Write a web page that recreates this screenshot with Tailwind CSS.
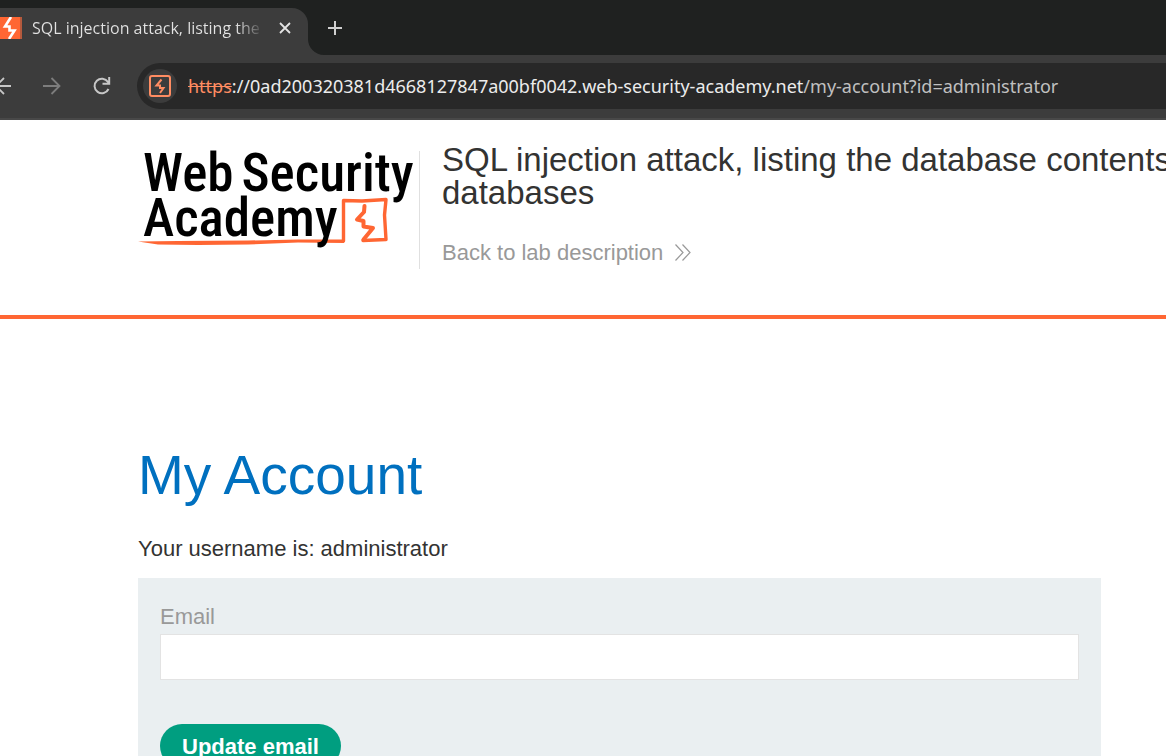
<!DOCTYPE html>
<html lang="en">
<head>
<meta charset="utf-8">
<meta name="viewport" content="width=device-width, initial-scale=1">
<title>SQL injection attack, listing the database contents</title>
<script src="https://cdn.jsdelivr.net/npm/@tailwindcss/browser@4"></script>
</head>
<body class="min-h-screen overflow-hidden bg-white font-['Liberation_Sans',Arial,sans-serif] text-[22px] leading-[33px] text-[#333332]">

<!-- Browser chrome -->
<div class="font-['Noto_Sans','Open_Sans',sans-serif]">
  <div class="flex h-[55px] items-end bg-[#1f2120]">
    <div class="flex h-[47px] w-[308px] items-center rounded-tr-[16px] bg-[#3c3c3c] pb-[8px]">
      <svg class="h-[22px] w-[22px] shrink-0" viewBox="0 0 22 22" aria-hidden="true">
        <rect width="22" height="22" fill="#ff6633"/><rect x="20" width="2" height="22" fill="#b55a3d"/>
        <path d="M11 0 5 9.500H9.500V13.500H14.500L9 22" fill="none" stroke="#fff" stroke-width="2.600"/>
      </svg>
      <span class="ml-[10px] w-[232px] overflow-hidden whitespace-nowrap bg-linear-to-r from-[#e3e3e3] from-88% to-transparent bg-clip-text font-['Open_Sans',sans-serif] text-[16px] leading-[24px] text-transparent">SQL injection attack, listing the database</span>
      <button class="ml-[14px] shrink-0" aria-label="Close tab">
        <svg class="block h-[14px] w-[14px]" viewBox="0 0 14 14"><path d="M2 2 12 12M12 2 2 12" fill="none" stroke="#e3e3e3" stroke-width="1.800"/></svg>
      </button>
    </div>
    <svg class="h-[16px] w-[16px] shrink-0" viewBox="0 0 16 16" aria-hidden="true"><path d="M0 0A16 16 0 0 0 16 16H0Z" fill="#3c3c3c"/></svg>
    <button class="mb-[20px] ml-[4px]" aria-label="New tab">
      <svg class="block h-[14px] w-[14px]" viewBox="0 0 14 14"><path d="M7 0V14M0 7H14" fill="none" stroke="#d0d0d0" stroke-width="2"/></svg>
    </button>
  </div>
  <div class="flex h-[65px] items-center border-b-2 border-[#484848] bg-[#3c3c3c] pb-px">
    <button class="shrink-0" aria-label="Back">
      <svg class="block h-[18px] w-[12px]" viewBox="0 0 12 18"><path d="M4 1-4 9 4 17M-4 9H11" fill="none" stroke="#c7c7c7" stroke-width="1.800"/></svg>
    </button>
    <button class="ml-[31px] shrink-0" aria-label="Forward">
      <svg class="block h-[18px] w-[18px]" viewBox="0 0 18 18"><path d="M8.500 1 16.500 9 8.500 17M16.500 9H0" fill="none" stroke="#7d7d7d" stroke-width="1.800"/></svg>
    </button>
    <button class="ml-[32px] shrink-0" aria-label="Reload">
      <svg class="block h-[18px] w-[18px]" viewBox="0 0 18 18"><path d="M15.500 12A7.300 7.300 0 1 1 15 5L16 6.500M16.200 0V6.800H9.500" fill="none" stroke="#c7c7c7" stroke-width="2"/></svg>
    </button>
    <div class="ml-[26px] flex h-[46px] flex-1 items-center rounded-l-full bg-[#282828] pl-[6px]">
      <span class="flex h-[34px] w-[34px] shrink-0 items-center justify-center rounded-full bg-[#3c3c3c]">
        <svg class="h-[22px] w-[22px]" viewBox="0 0 22 22" aria-hidden="true"><rect x="1" y="1" width="20" height="20" rx="2" fill="none" stroke="#ff8c62" stroke-width="2"/><path d="M12.500 4.500 7.500 10.500H11V13H14.500L11 18" fill="none" stroke="#ff8c62" stroke-width="2"/></svg>
      </span>
      <span class="ml-[11px] whitespace-nowrap text-[18px] leading-[26px] text-[#c0c0c0]"><span class="text-[#ff8c62] line-through decoration-1">https</span><span class="text-[#ececec]">://0ad200320381d4668127847a00bf0042.web-security-academy.net</span>/my-account?id=administrator</span>
    </div>
  </div>
</div>

<header class="flex items-start border-b-4 border-[#ff6633] pt-[23px] pb-[46px] pl-[138px]">
  <a href="#" class="relative mt-[8px] h-[118px] w-[282px] shrink-0 border-r border-[#e0e0e0] font-['Roboto_Condensed','Liberation_Sans_Narrow',sans-serif] text-[53px] leading-[45px] font-medium text-black">
    <svg class="absolute top-0 left-0 h-[118px] w-[280px]" viewBox="0 0 280 118" aria-hidden="true">
      <path d="M205.500 90V49.500L224 50 248 48.500 246.500 64 248 88.500 225 89.500" fill="none" stroke="#ff6633" stroke-width="3.400" stroke-linejoin="round" stroke-linecap="round"/>
      <path d="M226.500 55 226 61 219 68.500 225.500 70V75.500L235 77 225.500 88.500" fill="none" stroke="#ff6633" stroke-width="4" stroke-linejoin="round" stroke-linecap="round"/>
      <path d="M0 90.500 40 90 110 89.500 160 88.500 206 88.500V92L160 91.500 110 93.500 60 94 20 93.500Z" fill="#ff6633"/>
    </svg>
    <span class="relative flex gap-[8px] pl-[5px] whitespace-nowrap"><span>Web</span><span>Security</span></span>
    <span class="relative block pl-[5px]">Academy</span>
  </a>
  <div class="pl-[22px]">
    <h2 class="text-[33px] leading-[33px] whitespace-nowrap">SQL injection attack, listing the database contents<br>databases</h2>
    <a href="#" class="mt-[27px] flex items-center gap-[12px] text-[#999999]">Back to lab description
      <svg class="h-[17px] w-[18px]" viewBox="0 0 18 17" aria-hidden="true"><path d="M0.500 0.500 8 8.500 0.500 16.500M7.500 0.500 15 8.500 7.500 16.500" fill="none" stroke="#999" stroke-width="1.200"/></svg>
    </a>
  </div>
</header>

<main class="mr-[65px] ml-[138px] pt-[124px]">
  <h1 class="text-[55px] leading-[64px] text-[#0070bf]">My Account</h1>
  <p class="mt-[25px]">Your username is: administrator</p>
  <form class="mt-[13px] bg-[#eaeff1] px-[22px] pt-[22px] pb-[22px]">
    <label for="email" class="block text-[#999999]">Email</label>
    <input id="email" type="email" class="mt-px block h-[46px] w-full border border-[#e3e3e3] bg-white px-[11px] outline-none">
    <button type="button" class="mt-[44px] h-[44px] rounded-full bg-[#009e80] px-[22px] font-bold text-white">Update email</button>
  </form>
</main>
</body>
</html>
